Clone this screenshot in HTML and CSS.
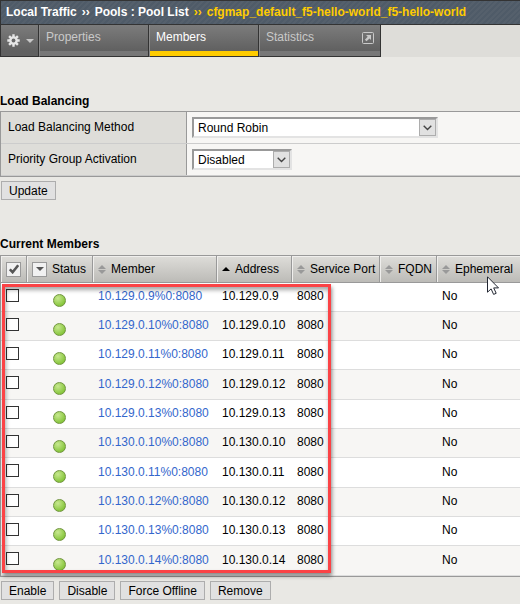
FILE: index.html
```html
<!DOCTYPE html>
<html lang="en">
<head>
<meta charset="utf-8">
<title>Pool List: Members</title>
<link rel="stylesheet" href="styles.css">
</head>
<body>
<header class="crumbs">
  <span>Local Traffic</span><span class="sep">››</span><span>Pools : Pool List</span><span class="sep current">››</span><span class="current">cfgmap_default_f5-hello-world_f5-hello-world</span>
</header>
<nav class="tabs">
  <button class="gear" type="button" aria-label="Options">
    <svg width="13" height="13" viewBox="0 0 13 13"><g stroke="#e6e6e6" stroke-width="2.4"><path d="M6.500 .3v12.400M.3 6.500h12.400M2.100 2.100l8.800 8.800M10.900 2.100l-8.800 8.800"/></g><circle cx="6.500" cy="6.500" r="4.300" fill="#e6e6e6"/><circle cx="6.500" cy="6.500" r="1.900" fill="#686868"/></svg>
    <svg width="8" height="4" viewBox="0 0 8 4"><path d="M0 0h8L4 4z" fill="#c8c8c8"/></svg>
  </button>
  <a class="tab" href="#">Properties</a>
  <a class="tab active" href="#">Members</a>
  <a class="tab stats" href="#">Statistics
    <svg width="12" height="12" viewBox="0 0 12 12"><rect x=".5" y=".5" width="11" height="11" rx="1" fill="none" stroke="#c9c9c9"/><path d="M4 3h5v5L7.500 6.500 4.500 9.300 2.900 7.700 5.700 4.700z" fill="#c9c9c9"/></svg>
  </a>
</nav>
<main>
  <h2>Load Balancing</h2>
  <form class="settings">
    <div class="setting">
      <label for="method">Load Balancing Method</label>
      <div class="field"><span class="drop method"><select id="method"><option>Round Robin</option></select><span class="arrow"><svg width="9" height="6" viewBox="0 0 9 6"><path d="M.7 .7l3.800 3.800L8.300 .7" fill="none" stroke="#444" stroke-width="1.400"/></svg></span></span></div>
    </div>
    <div class="setting">
      <label for="priority">Priority Group Activation</label>
      <div class="field"><span class="drop priority"><select id="priority"><option>Disabled</option></select><span class="arrow"><svg width="9" height="6" viewBox="0 0 9 6"><path d="M.7 .7l3.800 3.800L8.300 .7" fill="none" stroke="#444" stroke-width="1.400"/></svg></span></span></div>
    </div>
  </form>
  <div class="actions"><button type="button">Update</button></div>

  <h2 class="members-title">Current Members</h2>
  <div class="members">
    <table>
      <colgroup><col class="c-check"><col class="c-status"><col class="c-member"><col class="c-address"><col class="c-port"><col class="c-fqdn"><col></colgroup>
      <thead>
        <tr>
          <th><button class="mini" type="button" aria-label="Select all"><svg width="10" height="10" viewBox="0 0 10 10"><path d="M.8 5.300L3.600 8.200 9.200 1.200" fill="none" stroke="#555" stroke-width="2.600"/></svg></button></th>
          <th><div class="head"><button class="mini" type="button" aria-label="Filter status"><svg width="8" height="4" viewBox="0 0 8 4"><path d="M0 0h8L4 4z" fill="#555"/></svg></button>Status</div></th>
          <th><div class="head"><svg class="sort" width="8" height="9" viewBox="0 0 8 9"><path d="M0 4l4-4 4 4zM0 5h8L4 9z"/></svg>Member</div></th>
          <th><div class="head"><svg class="sort on" width="8" height="9" viewBox="0 0 8 9"><path d="M0 6l4-4 4 4z"/></svg>Address</div></th>
          <th><div class="head"><svg class="sort" width="8" height="9" viewBox="0 0 8 9"><path d="M0 4l4-4 4 4zM0 5h8L4 9z"/></svg>Service Port</div></th>
          <th><div class="head"><svg class="sort" width="8" height="9" viewBox="0 0 8 9"><path d="M0 4l4-4 4 4zM0 5h8L4 9z"/></svg>FQDN</div></th>
          <th><div class="head"><svg class="sort" width="8" height="9" viewBox="0 0 8 9"><path d="M0 4l4-4 4 4zM0 5h8L4 9z"/></svg>Ephemeral</div></th>
        </tr>
      </thead>
      <tbody>
        <tr><td><input type="checkbox" aria-label="10.129.0.9"></td><td><span class="dot"></span></td><td><a href="#">10.129.0.9%0:8080</a></td><td>10.129.0.9</td><td>8080</td><td></td><td>No</td></tr>
        <tr><td><input type="checkbox" aria-label="10.129.0.10"></td><td><span class="dot"></span></td><td><a href="#">10.129.0.10%0:8080</a></td><td>10.129.0.10</td><td>8080</td><td></td><td>No</td></tr>
        <tr><td><input type="checkbox" aria-label="10.129.0.11"></td><td><span class="dot"></span></td><td><a href="#">10.129.0.11%0:8080</a></td><td>10.129.0.11</td><td>8080</td><td></td><td>No</td></tr>
        <tr><td><input type="checkbox" aria-label="10.129.0.12"></td><td><span class="dot"></span></td><td><a href="#">10.129.0.12%0:8080</a></td><td>10.129.0.12</td><td>8080</td><td></td><td>No</td></tr>
        <tr><td><input type="checkbox" aria-label="10.129.0.13"></td><td><span class="dot"></span></td><td><a href="#">10.129.0.13%0:8080</a></td><td>10.129.0.13</td><td>8080</td><td></td><td>No</td></tr>
        <tr><td><input type="checkbox" aria-label="10.130.0.10"></td><td><span class="dot"></span></td><td><a href="#">10.130.0.10%0:8080</a></td><td>10.130.0.10</td><td>8080</td><td></td><td>No</td></tr>
        <tr><td><input type="checkbox" aria-label="10.130.0.11"></td><td><span class="dot"></span></td><td><a href="#">10.130.0.11%0:8080</a></td><td>10.130.0.11</td><td>8080</td><td></td><td>No</td></tr>
        <tr><td><input type="checkbox" aria-label="10.130.0.12"></td><td><span class="dot"></span></td><td><a href="#">10.130.0.12%0:8080</a></td><td>10.130.0.12</td><td>8080</td><td></td><td>No</td></tr>
        <tr><td><input type="checkbox" aria-label="10.130.0.13"></td><td><span class="dot"></span></td><td><a href="#">10.130.0.13%0:8080</a></td><td>10.130.0.13</td><td>8080</td><td></td><td>No</td></tr>
        <tr><td><input type="checkbox" aria-label="10.130.0.14"></td><td><span class="dot"></span></td><td><a href="#">10.130.0.14%0:8080</a></td><td>10.130.0.14</td><td>8080</td><td></td><td>No</td></tr>
      </tbody>
    </table>
    <div class="highlight"></div>
    <svg class="pointer" width="13" height="20" viewBox="0 0 13 20"><path d="M.5 .8v15.400l3.600-3.300 2.500 5.500 2.600-1.100-2.500-5.400h4.800z" fill="#fff" stroke="#222631"/></svg>
  </div>
  <div class="actions">
    <button type="button">Enable</button>
    <button type="button">Disable</button>
    <button type="button">Force Offline</button>
    <button type="button">Remove</button>
  </div>
</main>
</body>
</html>
```
FILE: styles.css
```css
* { box-sizing: border-box; }

body {
  margin: 0;
  background: #e9e8e4;
  color: #000;
  font: 12px/16px "Liberation Sans", Arial, sans-serif;
}

button, select, input { font: inherit; color: inherit; margin: 0; }

svg { display: block; flex: none; }

.crumbs {
  display: flex;
  height: 25px;
  padding-left: 5px;
  border: 1px solid #333;
  border-right: 0;
  background: repeating-linear-gradient(135deg, #4f5b68 0 2px, #55606c 2px 4px);
  color: #fff;
  font-weight: bold;
  line-height: 22px;
  white-space: nowrap;
}

.sep { margin: 0 5px; }
.current { color: #fc0; }

.tabs {
  display: flex;
  height: 32px;
  background: #deddd9;
}

.gear, .tab {
  height: 32px;
  border: solid #333;
  border-width: 0 1px 1px 0;
  background: linear-gradient(#7c7c7c, #606060 26px);
}

.gear {
  display: flex;
  align-items: center;
  gap: 6px;
  width: 39px;
  padding: 0 0 0 6px;
  border-left-width: 1px;
}

.tab {
  width: 110px;
  padding: 4px 6px;
  border-left: 1px solid #8a8a8a;
  box-shadow: inset 0 -5px #777;
  color: #c9c9c9;
  text-decoration: none;
}

.tab.active { color: #fff; box-shadow: inset 0 -5px #fc0; }

.tab.stats {
  display: flex;
  justify-content: space-between;
  width: 122px;
}

.stats svg { margin-top: 3px; }

h2 {
  margin: 36px 0 2px;
  font-size: 12px;
  line-height: 16px;
}

.settings {
  border: 1px solid #999;
  border-right: 0;
}

.setting {
  display: flex;
  height: 32px;
  border-bottom: 1px solid #ccc;
}

.setting label {
  width: 186px;
  padding: 7px;
  border-right: 1px solid #999;
  background: #deddd9;
}

.field {
  flex: 1;
  padding: 5px;
  background: #f7f6f4;
}

.drop {
  display: flex;
  height: 21px;
  border: 2px solid;
  border-color: #999 #e3e3e3 #e3e3e3 #999;
  background: #fff;
}

.method { width: 246px; }
.priority { width: 100px; }

.drop select {
  flex: 1;
  min-width: 0;
  padding: 0 4px;
  border: 0;
  background: none;
  appearance: none;
}

.arrow {
  display: grid;
  place-items: center;
  width: 17px;
  border: 1px solid #adadad;
  background: #e1e1e1;
}

.actions {
  display: flex;
  gap: 5px;
  padding: 4px 1px;
}

.actions button {
  height: 19px;
  padding: 0 7px;
  border: 1px solid #adadad;
  background: #e1e1e1;
  line-height: 16px;
}

.members-title { margin-top: 32px; margin-bottom: 3px; }

.members { position: relative; }

table {
  width: 100%;
  border: 1px solid #999;
  border-right: 0;
  border-spacing: 0;
  table-layout: fixed;
}

.c-check { width: 26px; }
.c-status { width: 66px; }
.c-member { width: 124px; }
.c-address { width: 75px; }
.c-port { width: 88px; }
.c-fqdn { width: 57px; }

th {
  height: 27px;
  padding: 0 0 0 5px;
  border: solid #999;
  border-width: 0 1px 1px 0;
  background: linear-gradient(#deddd9, #bcbbb7);
  box-shadow: inset 1px 1px #f0efed;
  font-weight: normal;
  white-space: nowrap;
}

th:last-child { border-right: 0; }

.head { display: flex; align-items: center; gap: 5px; }

.sort { fill: #999; }
.sort.on { fill: #000; }

.mini {
  display: grid;
  place-items: center;
  width: 15px;
  height: 15px;
  padding: 0;
  border: 1px solid #999;
  background: #f1f1f1;
}

td {
  height: 29px;
  padding: 0 0 2px 5px;
  border-bottom: 1px solid #ddd;
  background: #fff;
}

tbody tr:nth-child(even) td { background: #f7f6f4; }
tbody tr:nth-child(3n + 4) td { height: 30px; }

td a { color: #36c; text-decoration: none; }

input[type="checkbox"] {
  display: block;
  width: 13px;
  height: 13px;
  margin-bottom: 2px;
  border: 1px solid #333;
  background: #fff;
  appearance: none;
}

.dot {
  display: block;
  width: 13px;
  height: 13px;
  margin: 9px 0 0 21px;
  border: 1px solid #71953f;
  border-radius: 50%;
  background: radial-gradient(circle at 35% 30%, #c8e890, #85c53a 75%);
}

.highlight {
  position: absolute;
  top: 29px;
  bottom: 4px;
  left: 2px;
  width: 329px;
  border: 3px solid #fb4346;
  box-shadow: 1px 3px 4px rgba(0, 0, 0, .45), inset 1px 3px 4px rgba(0, 0, 0, .35);
  pointer-events: none;
}

.pointer {
  position: absolute;
  top: 21px;
  left: 487px;
}
```
